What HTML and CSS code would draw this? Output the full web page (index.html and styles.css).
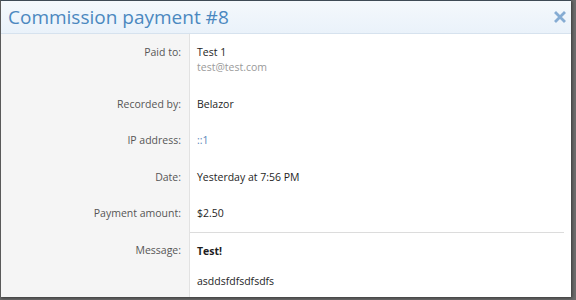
FILE: index.html
```html
<!DOCTYPE html>
<html>
<head>
<meta charset="utf-8">
<link rel="stylesheet" href="styles.css">
</head>
<body>
<div class="overlay">
  <div class="heading">
    <h2 class="title">Commission payment #8</h2>
    <span class="close" aria-label="Close">
      <svg width="12" height="12" viewBox="0 0 12 12"><path d="M2 2 L10 10 M10 2 L2 10" stroke="#86acd3" stroke-width="2.8" stroke-linecap="square" fill="none"/></svg>
    </span>
  </div>
  <div class="rows">
    <div class="row">
      <div class="label">Paid to:</div>
      <div class="value">Test 1<div class="muted">test@test.com</div></div>
    </div>
    <div class="row">
      <div class="label">Recorded by:</div>
      <div class="value">Belazor</div>
    </div>
    <div class="row">
      <div class="label">IP address:</div>
      <div class="value"><a class="link">::1</a></div>
    </div>
    <div class="row">
      <div class="label">Date:</div>
      <div class="value">Yesterday at 7:56 PM</div>
    </div>
    <div class="row">
      <div class="label">Payment amount:</div>
      <div class="value">$2.50</div>
    </div>
    <div class="row last">
      <div class="label">Message:</div>
      <div class="value message"><b>Test!</b><br><br>asddsfdfsdfsdfs</div>
    </div>
  </div>
</div>
</body>
</html>
```
FILE: styles.css
```css
html, body {
  margin: 0;
  padding: 0;
}
body {
  background: #6c6c6c;
  width: 576px;
  height: 300px;
  overflow: hidden;
  font-family: "Segoe UI", "Open Sans", "Noto Sans", sans-serif;
  font-size: 10.5px;
}
.overlay {
  width: 570px;
  height: 296px;
  background: #fff;
  border-top: 1px solid #3e4a55;
  border-left: 1px solid #5a5a5a;
  box-shadow: 1px 1px 3px rgba(0,0,0,0.5);
  display: flex;
  flex-direction: column;
  overflow: hidden;
}
.heading {
  flex: none;
  height: 32px;
  display: flex;
  align-items: center;
  justify-content: space-between;
  background: linear-gradient(#f4f8fc, #eaf2fa);
  border-bottom: 1px solid #d6e2ee;
  padding: 0 5px 0 7px;
}
.title {
  margin: 0;
  font-weight: normal;
  font-size: 19px;
  color: #4b88c0;
}
.close {
  display: flex;
  width: 12px;
  height: 12px;
}
.rows {
  flex: 1;
  display: flex;
  flex-direction: column;
}
.row {
  display: flex;
  flex: none;
}
.row.last {
  flex: 1;
}
.label {
  width: 180px;
  flex: none;
  text-align: right;
  padding: 11px 8px 10.5px 0;
  line-height: 15px;
  color: #555;
  background: #f5f5f5;
  border-right: 1px solid #e2e2e2;
}
.value {
  flex: 1;
  padding: 11px 0 10.5px 7px;
  line-height: 15px;
  color: #1e1e1e;
}
.message {
  border-top: 1px solid #dcdcdc;
  margin-right: 7px;
}
.muted {
  color: #9a9a9a;
}
.link {
  color: #5b86ba;
}
```
